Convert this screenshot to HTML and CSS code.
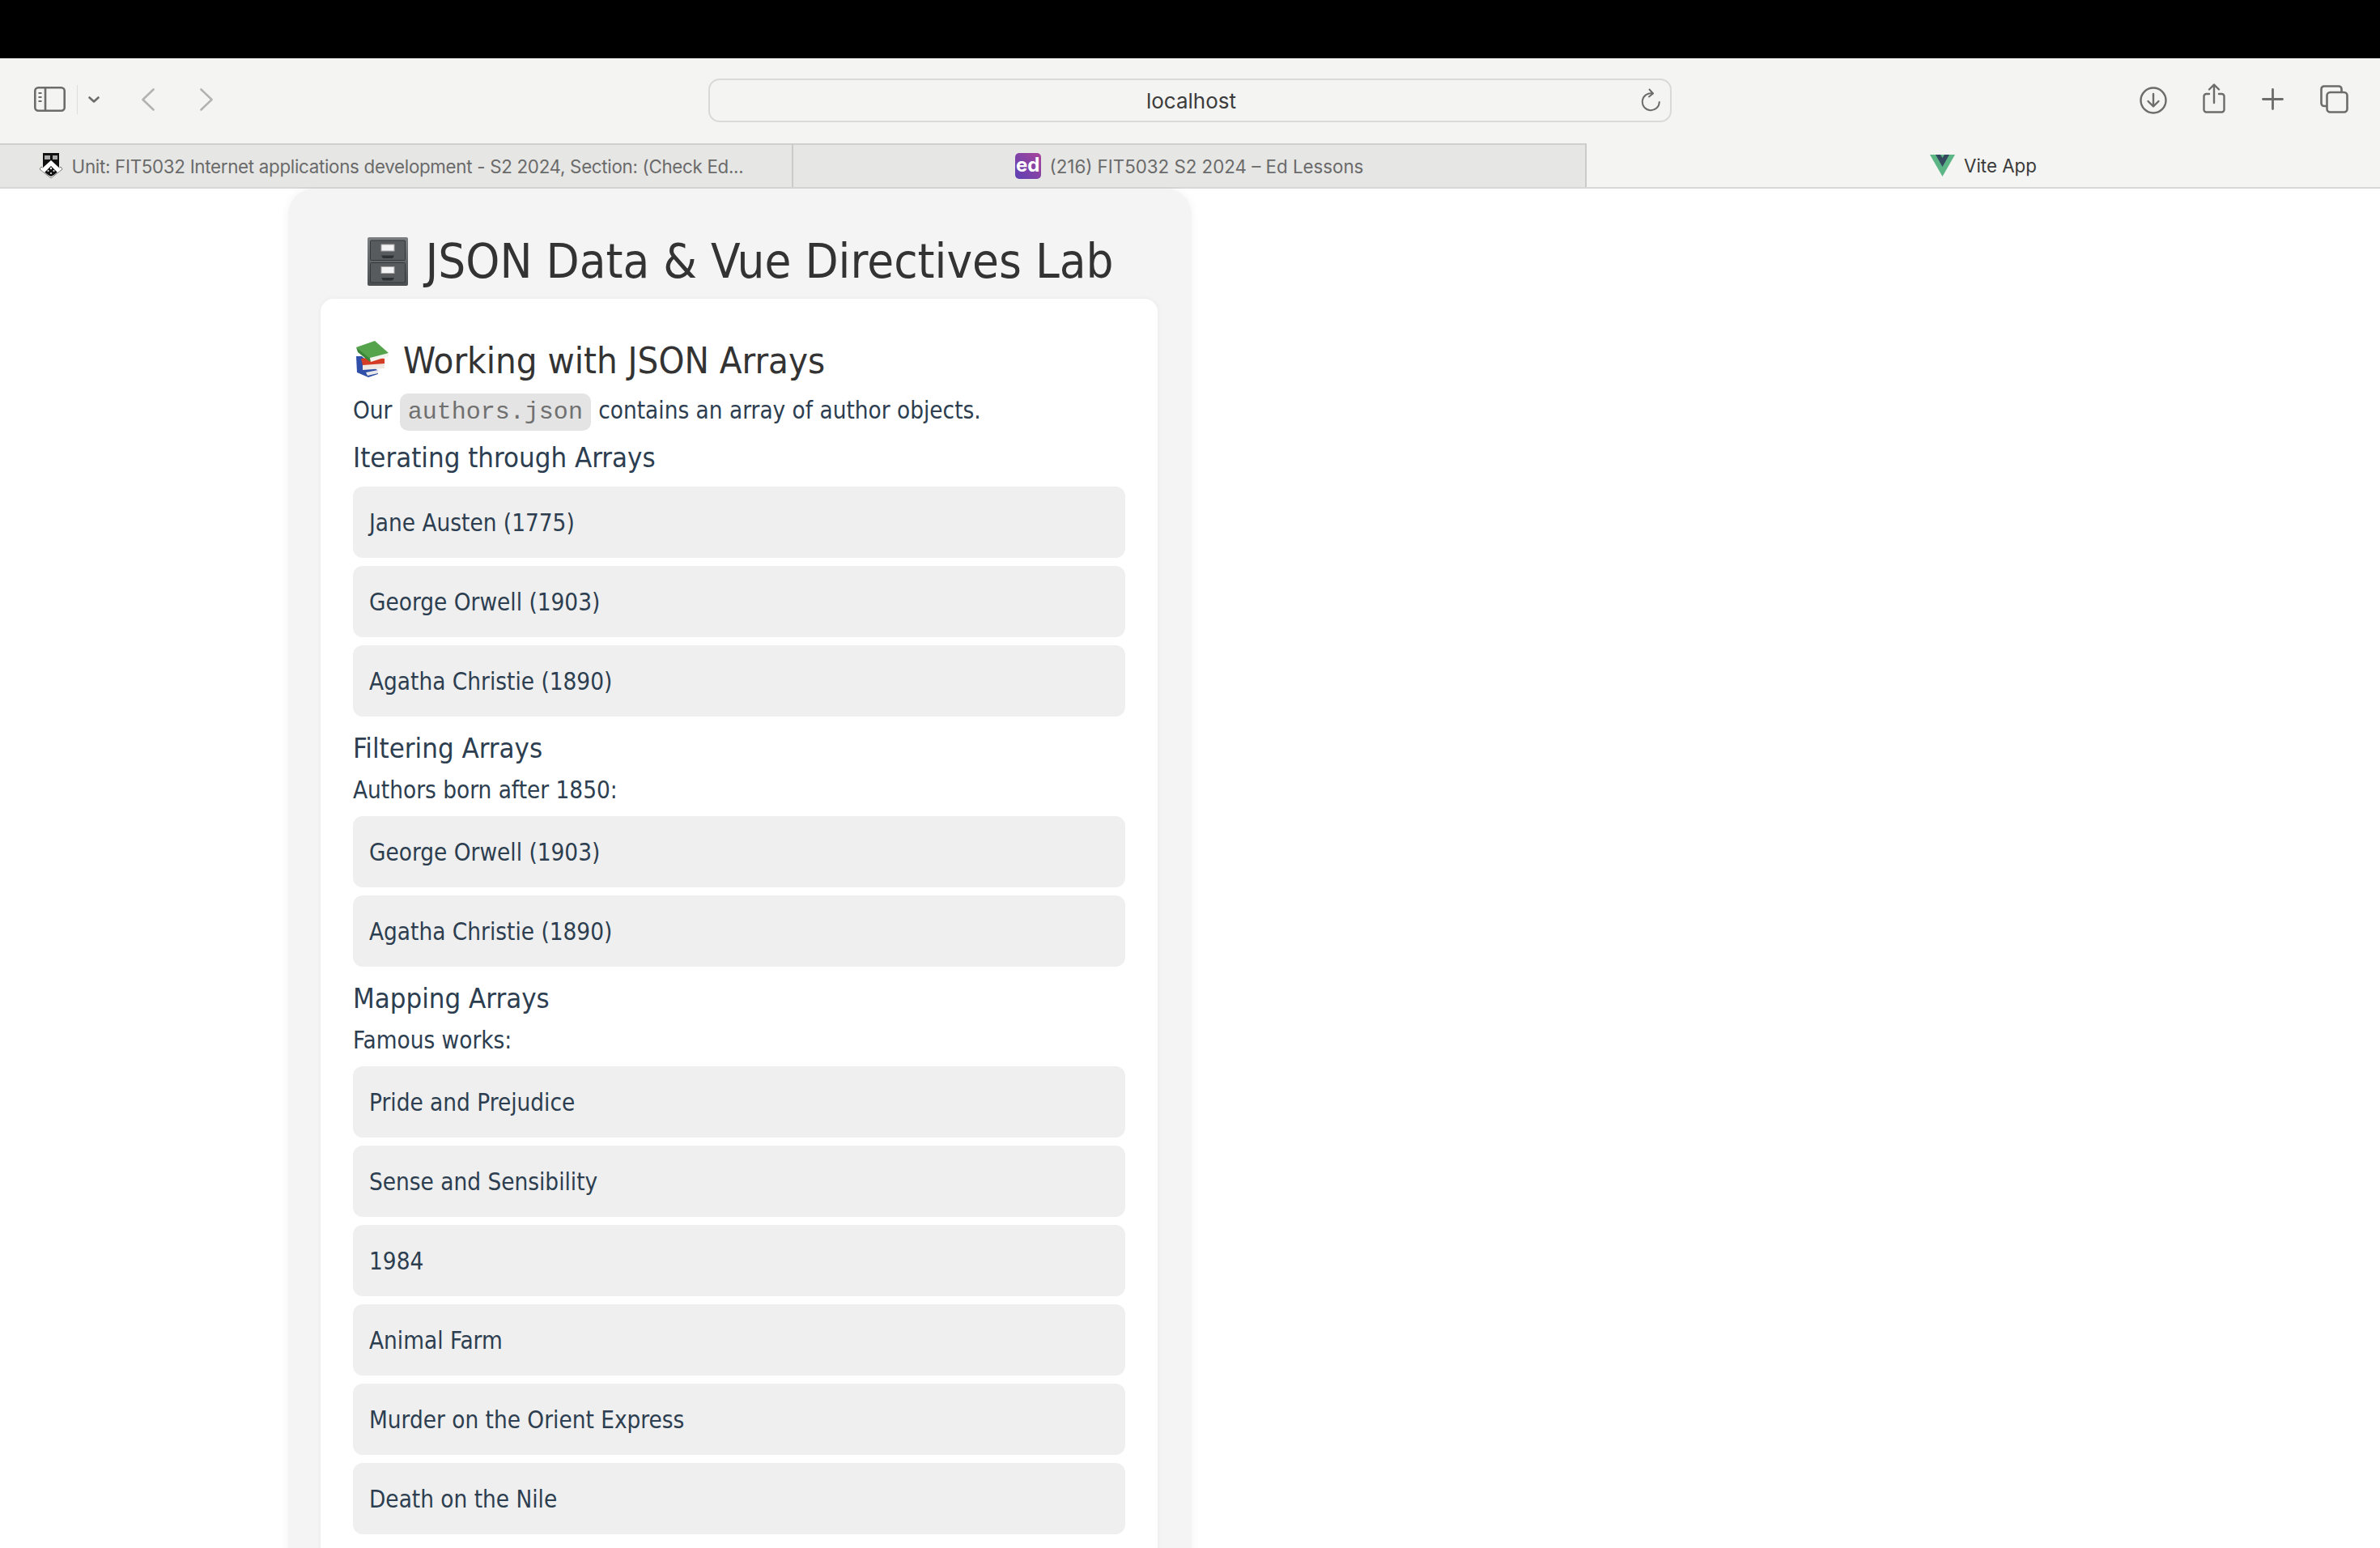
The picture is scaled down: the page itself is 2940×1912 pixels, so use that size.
FILE: index.html
```html
<!DOCTYPE html>
<html lang="en">
<head>
<meta charset="utf-8">
<title>Vite App</title>
<link rel="stylesheet" href="styles.css">
</head>
<body>
<div class="notch"></div>
<header class="toolbar">
  <div class="tools-left">
    <svg class="ic-sidebar" viewBox="0 0 39 31" fill="none" stroke="#6c6c6b" stroke-width="2.6"><rect x="1.3" y="1.3" width="36.4" height="28.4" rx="4"/><path d="M14 1.3v28.4"/><path d="M5.5 8h4M5.5 13h4M5.5 18h4" stroke-width="2"/></svg>
    <span class="sep"></span>
    <svg class="ic-chev" viewBox="0 0 14 8" fill="none" stroke="#6c6c6b" stroke-width="2.6" stroke-linecap="round" stroke-linejoin="round"><path d="M1.5 1.5 7 6.5l5.5-5"/></svg>
    <svg class="ic-nav ic-back" viewBox="0 0 16 28" fill="none" stroke="#b3b3b2" stroke-width="2.6" stroke-linecap="round" stroke-linejoin="round"><path d="M14.5 1.5 1.5 14l13 12.500"/></svg>
    <svg class="ic-nav ic-fwd" viewBox="0 0 16 28" fill="none" stroke="#b3b3b2" stroke-width="2.6" stroke-linecap="round" stroke-linejoin="round"><path d="M1.500 1.500 14.500 14l-13 12.500"/></svg>
  </div>
  <div class="address">
    <span class="url">localhost</span>
    <svg class="ic-reload" viewBox="0 0 26 30" fill="none" stroke="#6c6c6b" stroke-width="2" stroke-linecap="round" stroke-linejoin="round"><path d="M15.500 6.500A10.500 10.500 0 1 0 23.800 17"/><path d="M11.500 1.500 16 6.500l-5 4"/></svg>
  </div>
  <div class="tools-right">
    <svg class="ic-dl" viewBox="0 0 34 34" fill="none" stroke="#6c6c6b" stroke-width="2.400" stroke-linecap="round" stroke-linejoin="round"><circle cx="17" cy="17" r="15.500"/><path d="M17 9v15M10.500 18l6.500 6.500 6.500-6.500"/></svg>
    <svg class="ic-share" viewBox="0 0 28 37" fill="none" stroke="#6c6c6b" stroke-width="2.400" stroke-linecap="round" stroke-linejoin="round"><path d="M8 13H4.500a3 3 0 0 0-3 3v16.500a3 3 0 0 0 3 3h19a3 3 0 0 0 3-3V16a3 3 0 0 0-3-3H20"/><path d="M14 24V2M8 7.500 14 1.500l6 6"/></svg>
    <svg class="ic-plus" viewBox="0 0 27 27" fill="none" stroke="#6c6c6b" stroke-width="2.800" stroke-linecap="round"><path d="M13.500 1.500v24M1.500 13.500h24"/></svg>
    <svg class="ic-tabs" viewBox="0 0 35 35" fill="none" stroke="#6c6c6b" stroke-width="2.600" stroke-linejoin="round"><path d="M8.500 26H5a3.500 3.500 0 0 1-3.500-3.500V5A3.500 3.500 0 0 1 5 1.500h18A3.500 3.500 0 0 1 26.500 5v3.500"/><rect x="8.500" y="9" width="25" height="24.500" rx="4"/></svg>
  </div>
</header>
<nav class="tabs">
  <div class="tab tab-first">
    <svg class="fav-crest" viewBox="0 0 30 32">
      <path d="M1 20 15 31l14-11-2-3-12 10L3 17z" fill="#fff" stroke="#777" stroke-width="1"/>
      <path d="M5 0h20v19q0 5-10 10Q5 24 5 19z" fill="#111"/>
      <path d="M7 3h7v5H7zM17 3h6v5h-6z" fill="#aaa"/>
      <path d="M15 9 26 19v3l-3 2-8-8-8 8-3-2v-3z" fill="#fff"/>
      <circle cx="15" cy="19" r="1.200" fill="#fff"/><circle cx="11.500" cy="22" r="1" fill="#fff"/><circle cx="18.500" cy="22" r="1" fill="#fff"/><circle cx="15" cy="25" r="1" fill="#fff"/>
    </svg>
    <span class="tab-title tab-title-long">Unit: FIT5032 Internet applications development - S2 2024, Section: (Check Ed...</span>
  </div>
  <div class="tab">
    <span class="fav-ed">ed</span>
    <span class="tab-title">(216) FIT5032 S2 2024 – Ed Lessons</span>
  </div>
  <div class="tab tab-active">
    <svg class="fav-vue" viewBox="0 0 31 27"><path d="M0 0h31L15.500 27z" fill="#5cb585"/><path d="M7 0h6l2.500 4L18 0h6L15.500 15z" fill="#34495e"/></svg>
    <span class="tab-title">Vite App</span>
  </div>
</nav>
<main class="lab">
  <h1 class="lab-title">
    <svg class="emoji-cabinet" viewBox="0 0 50 60">
      <defs><linearGradient id="cab" x1="0" y1="0" x2="0" y2="1"><stop offset="0" stop-color="#7b7f82"/><stop offset="1" stop-color="#4c4f51"/></linearGradient></defs>
      <rect width="50" height="60" rx="2" fill="url(#cab)"/>
      <rect x="3.500" y="4" width="43" height="24.500" rx="1" fill="#585b5d" stroke="#35383a" stroke-width="1"/>
      <rect x="3.500" y="31.500" width="43" height="24.500" rx="1" fill="#585b5d" stroke="#35383a" stroke-width="1"/>
      <rect x="17" y="9" width="16" height="8" fill="#f4f4f4" stroke="#a9a9a9"/>
      <rect x="17" y="36.500" width="16" height="8" fill="#f4f4f4" stroke="#a9a9a9"/>
      <path d="M17 22.500h16l-2 3.500H19zM17 50h16l-2 3.500H19z" fill="#2e3133"/>
    </svg>
    <span>JSON Data &amp; Vue Directives Lab</span>
  </h1>
  <section class="card">
    <h2 class="card-title">
      <svg class="emoji-books" viewBox="8 2 46 50">
        <path d="M10 24h7l20 18v4l-12 4-14-6z" fill="#2f4fa8"/>
        <path d="M22 44 37 41v4L24 48z" fill="#e8e8ea"/>
        <path d="M16 27 30 25 45 27v9L18 35z" fill="#d43c25"/>
        <path d="M18 35 45 33v6L18 41z" fill="#f0e8e2"/>
        <path d="M10 13 33 5 50 20 28 30z" fill="#55a44c"/>
        <path d="M10 13 27 27v4L12 19z" fill="#3b8538"/>
        <path d="M27 26 50 20v4L28 31z" fill="#f2f5ee"/>
      </svg>
      <span>Working with JSON Arrays</span>
    </h2>
    <p class="text text-intro">Our <code class="code">authors.json</code> contains an array of author objects.</p>
    <h3 class="sub sub-first">Iterating through Arrays</h3>
    <ul class="list list-first">
      <li class="item">Jane Austen (1775)</li>
      <li class="item">George Orwell (1903)</li>
      <li class="item">Agatha Christie (1890)</li>
    </ul>
    <h3 class="sub">Filtering Arrays</h3>
    <p class="text">Authors born after 1850:</p>
    <ul class="list">
      <li class="item">George Orwell (1903)</li>
      <li class="item">Agatha Christie (1890)</li>
    </ul>
    <h3 class="sub">Mapping Arrays</h3>
    <p class="text">Famous works:</p>
    <ul class="list">
      <li class="item">Pride and Prejudice</li>
      <li class="item">Sense and Sensibility</li>
      <li class="item">1984</li>
      <li class="item">Animal Farm</li>
      <li class="item">Murder on the Orient Express</li>
      <li class="item">Death on the Nile</li>
    </ul>
  </section>
</main>
</body>
</html>
```
FILE: styles.css
```css
* { box-sizing: border-box; }
html, body { margin: 0; padding: 0; background: #fff; }
body { height: 1912px; overflow: hidden; font-family: "DejaVu Sans Condensed", "DejaVu Sans", sans-serif; }

.notch { height: 72px; background: #000; }

.toolbar { height: 105px; padding-bottom: 4px; background: #f4f4f2; display: flex; align-items: center; }
.tools-left { width: 875px; padding-left: 42px; display: flex; align-items: center; }
.ic-sidebar { width: 39px; height: 31px; }
.sep { width: 1px; height: 36px; background: #dedede; margin-left: 14px; }
.ic-chev { width: 14px; height: 8px; margin-left: 13px; }
.ic-nav { width: 16px; height: 28px; }
.ic-back { margin-left: 52px; }
.ic-fwd { margin-left: 56px; }

.address { width: 1190px; height: 54px; margin-top: 3px; border: 2px solid #d9d9d7; border-radius: 14px; background: #f4f4f2; display: flex; align-items: center; justify-content: center; position: relative; }
.url { font-family: Inter, sans-serif; font-size: 26px; color: #3c3c3c; margin-left: 3px; margin-top: 1px; }
.ic-reload { position: absolute; right: 11px; top: 10px; width: 26px; height: 30px; }

.tools-right { flex: 1; display: flex; align-items: center; padding-left: 578px; }
.ic-dl { width: 34px; height: 34px; margin-top: 2px; }
.ic-share { width: 28px; height: 37px; margin-left: 44px; margin-top: -2px; }
.ic-plus { width: 27px; height: 27px; margin-left: 45px; }
.ic-tabs { width: 35px; height: 35px; margin-left: 45px; }

.tabs { height: 56px; display: flex; border-bottom: 2px solid #d8d8d8; }
.tab { flex: 0 0 980px; background: #e6e6e5; border-top: 2px solid #cfcfcf; border-right: 2px solid #cbcbcb; display: flex; align-items: center; justify-content: center; gap: 11px; }
.tab-first { padding-right: 12px; }
.tab-active { background: #f4f4f2; border: 0; gap: 11px; }
.tab-title { font-family: Inter, sans-serif; font-size: 22.300px; color: #6a6a6a; white-space: nowrap; }
.tab-title-long { letter-spacing: -0.280px; }
.tab-active .tab-title { color: #3a3a3a; }
.fav-crest { width: 30px; height: 32px; }
.fav-ed { width: 32px; height: 32px; border-radius: 5px; background: linear-gradient(45deg, #5c41b4, #a8459a); color: #fff; font-family: Inter, sans-serif; font-weight: 700; font-size: 24px; line-height: 30px; text-align: center; }
.fav-vue { width: 31px; height: 27px; }

.lab { width: 1116px; margin-left: 356px; padding: 54px 42px 0 40px; background: #f4f4f4; border-radius: 32px 32px 0 0; box-shadow: 0 0 12px rgba(0, 0, 0, 0.05); }
.lab-title { margin: 0 0 10px; padding-left: 4px; height: 72px; font-size: 59.500px; line-height: 72px; font-weight: 400; color: #333; display: flex; justify-content: center; align-items: center; gap: 21px; white-space: nowrap; }
.emoji-cabinet { width: 50px; height: 60px; }

.card { background: #fff; border-radius: 16px; padding: 52px 40px 60px; box-shadow: 0 0 6px rgba(0, 0, 0, 0.05); }
.card-title { margin: 0; height: 50px; font-size: 45.200px; line-height: 50px; font-weight: 400; color: #333; display: flex; align-items: center; gap: 14px; white-space: nowrap; }
.emoji-books { width: 46px; height: 50px; margin-left: 2px; margin-top: -6px; }

.text { margin: 8px 0 0; height: 44px; font-size: 29.400px; line-height: 44px; color: #2c3e50; }
.text-intro { margin-top: 14px; }
.code { font-family: "Liberation Mono", monospace; font-size: 30px; color: #707070; background: #e4e4e4; border-radius: 10px; padding: 6px 10px; margin: 0 1px; }

.sub { margin: 17px 0 0; height: 44px; font-size: 34.500px; line-height: 44px; font-weight: 400; color: #2c3e50; }
.sub-first { margin-top: 14px; }

.list { list-style: none; margin: 10px 0 0; padding: 0; display: flex; flex-direction: column; gap: 10px; }
.list-first { margin-top: 14px; }
.item { height: 88px; padding-left: 20px; border-radius: 12px; background: #efefef; font-size: 29.400px; line-height: 91px; color: #2c3e50; }
```
